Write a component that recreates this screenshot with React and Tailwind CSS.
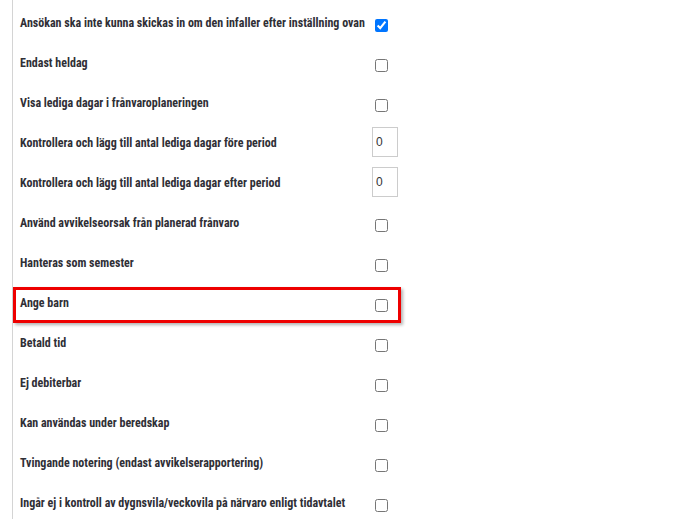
import React from 'react';

const rows = [
  { label: 'Ansökan ska inte kunna skickas in om den infaller efter inställning ovan', type: 'check', checked: true },
  { label: 'Endast heldag', type: 'check' },
  { label: 'Visa lediga dagar i frånvaroplaneringen', type: 'check' },
  { label: 'Kontrollera och lägg till antal lediga dagar före period', type: 'number' },
  { label: 'Kontrollera och lägg till antal lediga dagar efter period', type: 'number' },
  { label: 'Använd avvikelseorsak från planerad frånvaro', type: 'check' },
  { label: 'Hanteras som semester', type: 'check' },
  { label: 'Ange barn', type: 'check', highlight: true },
  { label: 'Betald tid', type: 'check' },
  { label: 'Ej debiterbar', type: 'check' },
  { label: 'Kan användas under beredskap', type: 'check' },
  { label: 'Tvingande notering (endast avvikelserapportering)', type: 'check' },
  { label: 'Ingår ej i kontroll av dygnsvila/veckovila på närvaro enligt tidavtalet', type: 'check' },
];

function SettingRow({ label, type, checked, highlight }) {
  return (
    <div className="relative flex items-center h-[40px]">
      {highlight && (
        <div className="absolute left-[0px] top-[5px] w-[388px] h-[36px] border-[3px] border-[#ee0000] shadow-[2px_2px_3px_rgba(0,0,0,0.3)] pointer-events-none" />
      )}
      <div className="w-[359px] pl-[7px] mt-[1px] text-[12px] font-bold text-[#2f2f36] whitespace-nowrap [font-stretch:75%] font-['Roboto','Liberation_Sans',sans-serif]">
        {label}
      </div>
      <div className="flex items-center">
        {type === 'check' ? (
          <input
            type="checkbox"
            defaultChecked={checked}
            className="w-[13px] h-[13px] ml-[3px] mt-[7px]"
          />
        ) : (
          <input
            type="text"
            defaultValue="0"
            className="w-[26px] h-[30px] border border-[#cccccc] pl-[3px] text-[12px] text-[#333] font-['Liberation_Sans',sans-serif] outline-none"
          />
        )}
      </div>
    </div>
  );
}

export default function App() {
  return (
    <div className="w-[683px] h-[519px] bg-white overflow-hidden">
      <div className="ml-[12px] h-full border-l border-[#d4d4d4] pt-[2px]">
        {rows.map((r) => (
          <SettingRow key={r.label} {...r} />
        ))}
      </div>
    </div>
  );
}
